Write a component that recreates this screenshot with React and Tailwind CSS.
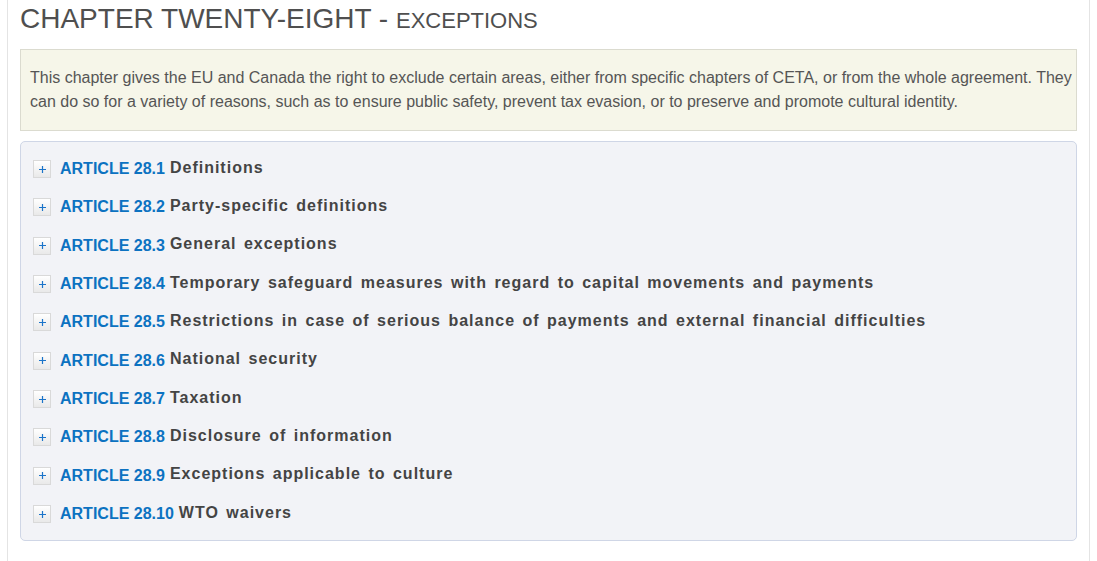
import React from "react";

const articles = [
  ["28.1", "Definitions"],
  ["28.2", "Party-specific definitions"],
  ["28.3", "General exceptions"],
  ["28.4", "Temporary safeguard measures with regard to capital movements and payments"],
  ["28.5", "Restrictions in case of serious balance of payments and external financial difficulties"],
  ["28.6", "National security"],
  ["28.7", "Taxation"],
  ["28.8", "Disclosure of information"],
  ["28.9", "Exceptions applicable to culture"],
  ["28.10", "WTO waivers"],
];

function PlusButton() {
  return (
    <span className="flex h-[18px] w-[18px] shrink-0 items-center justify-center border border-[#d9d9d9] bg-gradient-to-b from-white to-[#e9e9e9] text-[#1b74c9]">
      <svg width="9" height="9" viewBox="0 0 9 9" aria-hidden="true">
        <path d="M4.5 1v7M1 4.5h7" stroke="currentColor" strokeWidth="1.2" />
      </svg>
    </span>
  );
}

export default function App() {
  return (
    <div className="min-h-screen bg-white px-[7px] font-['Liberation_Sans',Arial,sans-serif]">
      <div className="min-h-screen border-x border-[#e4e4e4] px-[12px] pt-[2px]">
        <h1 className="text-[28px] leading-[34px] text-[#4f4f4f]">
          CHAPTER TWENTY-EIGHT - <span className="text-[22px]">EXCEPTIONS</span>
        </h1>
        <div className="mt-[11px] border border-[#dbdbcf] bg-[#f6f6e9] pl-[9px] pr-[4px] pt-[16px] pb-[16px] text-[16px] leading-[24px] text-[#555555]">
          This chapter gives the EU and Canada the right to exclude certain areas, either from specific chapters of CETA, or from the whole agreement. They can do so for a variety of reasons, such as to ensure public safety, prevent tax evasion, or to preserve and promote cultural identity.
        </div>
        <div className="mt-[10px] rounded-[5px] border border-[#cfd6e6] bg-[#f2f3f7] pl-[12px] pt-[8px] pb-[7px]">
          {articles.map(([num, title]) => (
            <div key={num} className="flex h-[38.33px] items-center">
              <PlusButton />
              <span className="ml-[9px] text-[16px] font-bold leading-[20px] text-[#0c72c1]">
                ARTICLE {num}
              </span>
              <span className="ml-[5px] mb-[3px] text-[16px] font-bold leading-[20px] tracking-[1px] [word-spacing:2px] text-[#444444]">
                {title}
              </span>
            </div>
          ))}
        </div>
      </div>
    </div>
  );
}
